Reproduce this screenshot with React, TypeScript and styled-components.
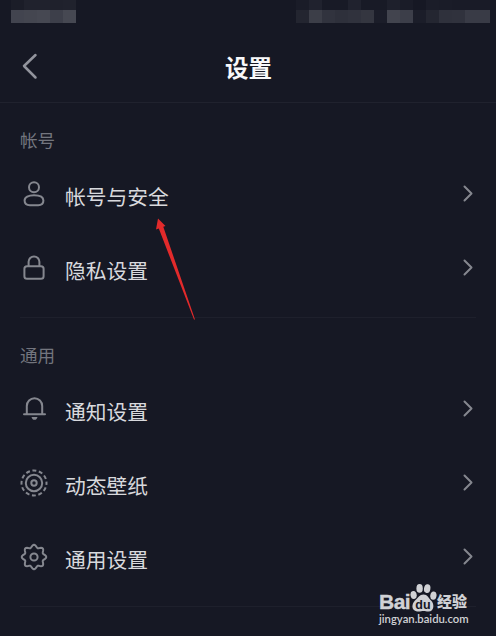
import React from "react";
import styled, { createGlobalStyle } from "styled-components";

const GlobalStyle = createGlobalStyle`
  * { box-sizing: border-box; }
  body {
    margin: 0;
    background: #161824;
    font-family: "Noto Sans CJK SC", "Noto Sans", sans-serif;
  }
`;

const Screen = styled.main`
  position: relative;
  width: 496px;
  height: 636px;
  overflow: hidden;
  background: #161824;
`;

const StatusBar = styled.div`
  display: flex;
  justify-content: space-between;
  height: 32px;
  padding: 0 6px 0 11px;
`;

const Mosaic = styled.div`
  display: flex;
`;

const Tile = styled.span<{ $w: number; $top: string; $main: string }>`
  width: ${(p) => p.$w}px;
  height: 23px;
  background: linear-gradient(${(p) => p.$top} 0 10px, ${(p) => p.$main} 10px);
`;

const Header = styled.header`
  display: grid;
  grid-template-columns: 48px 1fr 48px;
  align-items: center;
  height: 71px;
  border-bottom: 1px solid #20222e;
`;

const BackButton = styled.button`
  display: flex;
  width: 48px;
  height: 48px;
  padding: 9px 0 0 20px;
  border: 0;
  background: none;
`;

const Title = styled.h1`
  margin: 0;
  padding-left: 1px;
  color: #f8f8fa;
  font-size: 23.5px;
  line-height: 34px;
  font-weight: 700;
  text-align: center;
`;

const Section = styled.section`
  margin: 0 20px;
  padding-bottom: 12px;
  border-bottom: 1px solid #1e202c;
`;

const SectionLabel = styled.h2`
  display: flex;
  align-items: flex-end;
  height: 54px;
  margin: 0;
  padding-bottom: 4px;
  color: #73757e;
  font-size: 17.6px;
  line-height: 26px;
  font-weight: 400;
`;

const Row = styled.div`
  display: grid;
  grid-template-columns: 28px 1fr 10px;
  column-gap: 17px;
  align-items: center;
  height: 74px;
  color: #85878f;
`;

const RowText = styled.span`
  padding-top: 3px;
  color: #d8d9dd;
  font-size: 20.75px;
  line-height: 30px;
`;

const Icon = styled.svg`
  display: block;
  fill: none;
  stroke: currentColor;
  stroke-width: 2;
  stroke-linecap: round;
  stroke-linejoin: round;
`;

const BackIcon = styled(Icon)`
  color: #92949d;
  stroke-width: 2.5;
`;

const Chevron = styled(Icon)`
  margin-left: -5px;
  margin-top: -2px;
`;

const Pointer = styled.svg`
  position: absolute;
  left: 150px;
  top: 214px;
`;

const Watermark = styled.div`
  position: absolute;
  left: 379px;
  top: 582px;
  width: 92px;
  color: #d0d1d5;
`;

const Brand = styled.div`
  display: flex;
  align-items: flex-end;
  height: 30px;
`;

const BrandLatin = styled.span`
  width: 31px;
  font: 700 21px/20px "Liberation Sans", sans-serif;
  letter-spacing: -0.5px;
  height: 20px;
  -webkit-text-stroke: 0.4px currentColor;
`;

const BrandChinese = styled.span`
  margin-left: 0;
  font-size: 15px;
  line-height: 20px;
  font-weight: 900;
  height: 21px;
  white-space: nowrap;
`;

const Site = styled.div`
  font: 600 11.3px/14px Lato, sans-serif;
  white-space: nowrap;
`;

// Closed outline with eight soft lobes, starting from a lobe at the top.
const gearOutline =
  Array.from({ length: 96 }, (_, i) => {
    const a = (i / 96) * Math.PI * 2;
    const r = 10.9 + 1.35 * Math.cos(8 * a);
    return `${i ? "L" : "M"}${(14 + r * Math.sin(a)).toFixed(2)} ${(14 - r * Math.cos(a)).toFixed(2)}`;
  }).join("") + "Z";

const icons: Record<string, React.ReactNode> = {
  user: (
    <>
      <circle cx="14" cy="7.3" r="5" />
      <path d="M14 15.2c5.6 0 9.4 2 9.4 5.3 0 3.3-2.2 4.7-5.2 4.7H9.8c-3 0-5.2-1.4-5.2-4.7 0-3.3 3.8-5.3 9.4-5.3Z" />
    </>
  ),
  lock: (
    <>
      <rect x="4.4" y="12.2" width="19.2" height="12.600" rx="2.6" />
      <path d="M8.6 12V7.800a5.4 5.4 0 0 1 10.8 0V12" />
    </>
  ),
  bell: (
    <>
      <path d="M4 19.3h21M6.800 19V10.900a7.700 7.700 0 0 1 15.400 0v8.100" />
      <path d="M11.500 22h6c-.5 2-1.600 2.800-3 2.800s-2.500-.8-3-2.800Z" fill="currentColor" stroke="none" />
    </>
  ),
  wallpaper: (
    <>
      <circle cx="14" cy="14" r="12.5" strokeDasharray="4 2.545" strokeDashoffset="2" strokeLinecap="butt" />
      <circle cx="14" cy="14" r="8.2" />
      <circle cx="14" cy="14" r="2.7" />
    </>
  ),
  gear: (
    <>
      <path d={gearOutline} />
      <circle cx="14" cy="14" r="3.6" />
    </>
  ),
};

const sections = [
  {
    label: "帐号",
    rows: [
      { icon: "user", text: "帐号与安全" },
      { icon: "lock", text: "隐私设置" },
    ],
  },
  {
    label: "通用",
    rows: [
      { icon: "bell", text: "通知设置" },
      { icon: "wallpaper", text: "动态壁纸" },
      { icon: "gear", text: "通用设置" },
    ],
  },
];

const leftTiles: [number, string, string][] = [
  [13, "#1b1d28", "#42444f"],
  [13, "#20222d", "#444650"],
  [13, "#20222d", "#464852"],
  [13, "#1f212c", "#3d3f4a"],
  [13, "#20222d", "#464852"],
];

const rightTiles: [number, string, string][] = [
  [13, "#1a1c28", "#232530"],
  [13, "#20222e", "#3c3e48"],
  [13, "#181a26", "#31333e"],
  [13, "#181a26", "#2e303b"],
  [13, "#20222e", "#30323d"],
  [13, "#181a26", "#343640"],
  [13, "#181a26", "#1b1d29"],
  [13, "#1e202c", "#42444e"],
  [13, "#1a1c28", "#3c3e49"],
  [13, "#161824", "#1b1d29"],
  [13, "#1b1d29", "#242631"],
  [13, "#1a1c28", "#2f313c"],
  [13, "#191b27", "#30323d"],
  [13, "#191b27", "#393b46"],
  [12, "#191b27", "#393b46"],
];

const Tiles = ({ items }: { items: [number, string, string][] }) => (
  <Mosaic>
    {items.map(([w, top, main], i) => (
      <Tile key={i} $w={w} $top={top} $main={main} />
    ))}
  </Mosaic>
);

const Paw = () => (
  <svg width="27" height="29" viewBox="0 0 27 29" fill="currentColor">
    <ellipse cx="3.600" cy="12" rx="3.100" ry="4.100" transform="rotate(-10 3.600 12)" />
    <ellipse cx="9.600" cy="5.400" rx="3.200" ry="4.400" />
    <ellipse cx="17.200" cy="5.600" rx="3.200" ry="4.400" transform="rotate(10 17.200 5.600)" />
    <ellipse cx="23.400" cy="12.600" rx="3.100" ry="4.100" transform="rotate(10 23.400 12.600)" />
    <path d="M13.500 11.500C17.500 11.500 18.500 15 21 17.500C24.500 20.500 24.500 28.500 18.500 28.500C16 28.500 15.500 28 13.500 28C11.500 28 10 28.700 7 28.400C1 27.500 1.500 21 5 17.500C8 15 9.500 11.500 13.500 11.500Z" />
    <text x="13" y="26" fill="#161824" textAnchor="middle" fontFamily="Liberation Sans, sans-serif" fontWeight="700" fontSize="12.500">
      du
    </text>
  </svg>
);

export default function App() {
  return (
    <>
      <GlobalStyle />
      <Screen>
        <StatusBar>
          <Tiles items={leftTiles} />
          <Tiles items={rightTiles} />
        </StatusBar>
        <Header>
          <BackButton aria-label="返回">
            <BackIcon width="20" height="28" viewBox="0 0 20 28">
              <path d="M15.500 3 4 14l11.500 11.500" />
            </BackIcon>
          </BackButton>
          <Title>设置</Title>
        </Header>
        {sections.map((s) => (
          <Section key={s.label}>
            <SectionLabel>{s.label}</SectionLabel>
            {s.rows.map((r) => (
              <Row key={r.text}>
                <Icon width="28" height="28" viewBox="0 0 28 28">
                  {icons[r.icon]}
                </Icon>
                <RowText>{r.text}</RowText>
                <Chevron width="14" height="18" viewBox="0 0 14 18">
                  <path d="M3.500 2.500l7 7-7 7" />
                </Chevron>
              </Row>
            ))}
          </Section>
        ))}
        <Pointer width="50" height="108" viewBox="0 0 50 108" fill="#e22a2b">
          <path d="M8 4.500 15.500 12 13.300 12.800 45 105.500 44 105.500 8.800 14.500 6 15.500Z" />
        </Pointer>
        <Watermark>
          <Brand>
            <BrandLatin>Bai</BrandLatin>
            <Paw />
            <BrandChinese>经验</BrandChinese>
          </Brand>
          <Site>jingyan.baidu.com</Site>
        </Watermark>
      </Screen>
    </>
  );
}
